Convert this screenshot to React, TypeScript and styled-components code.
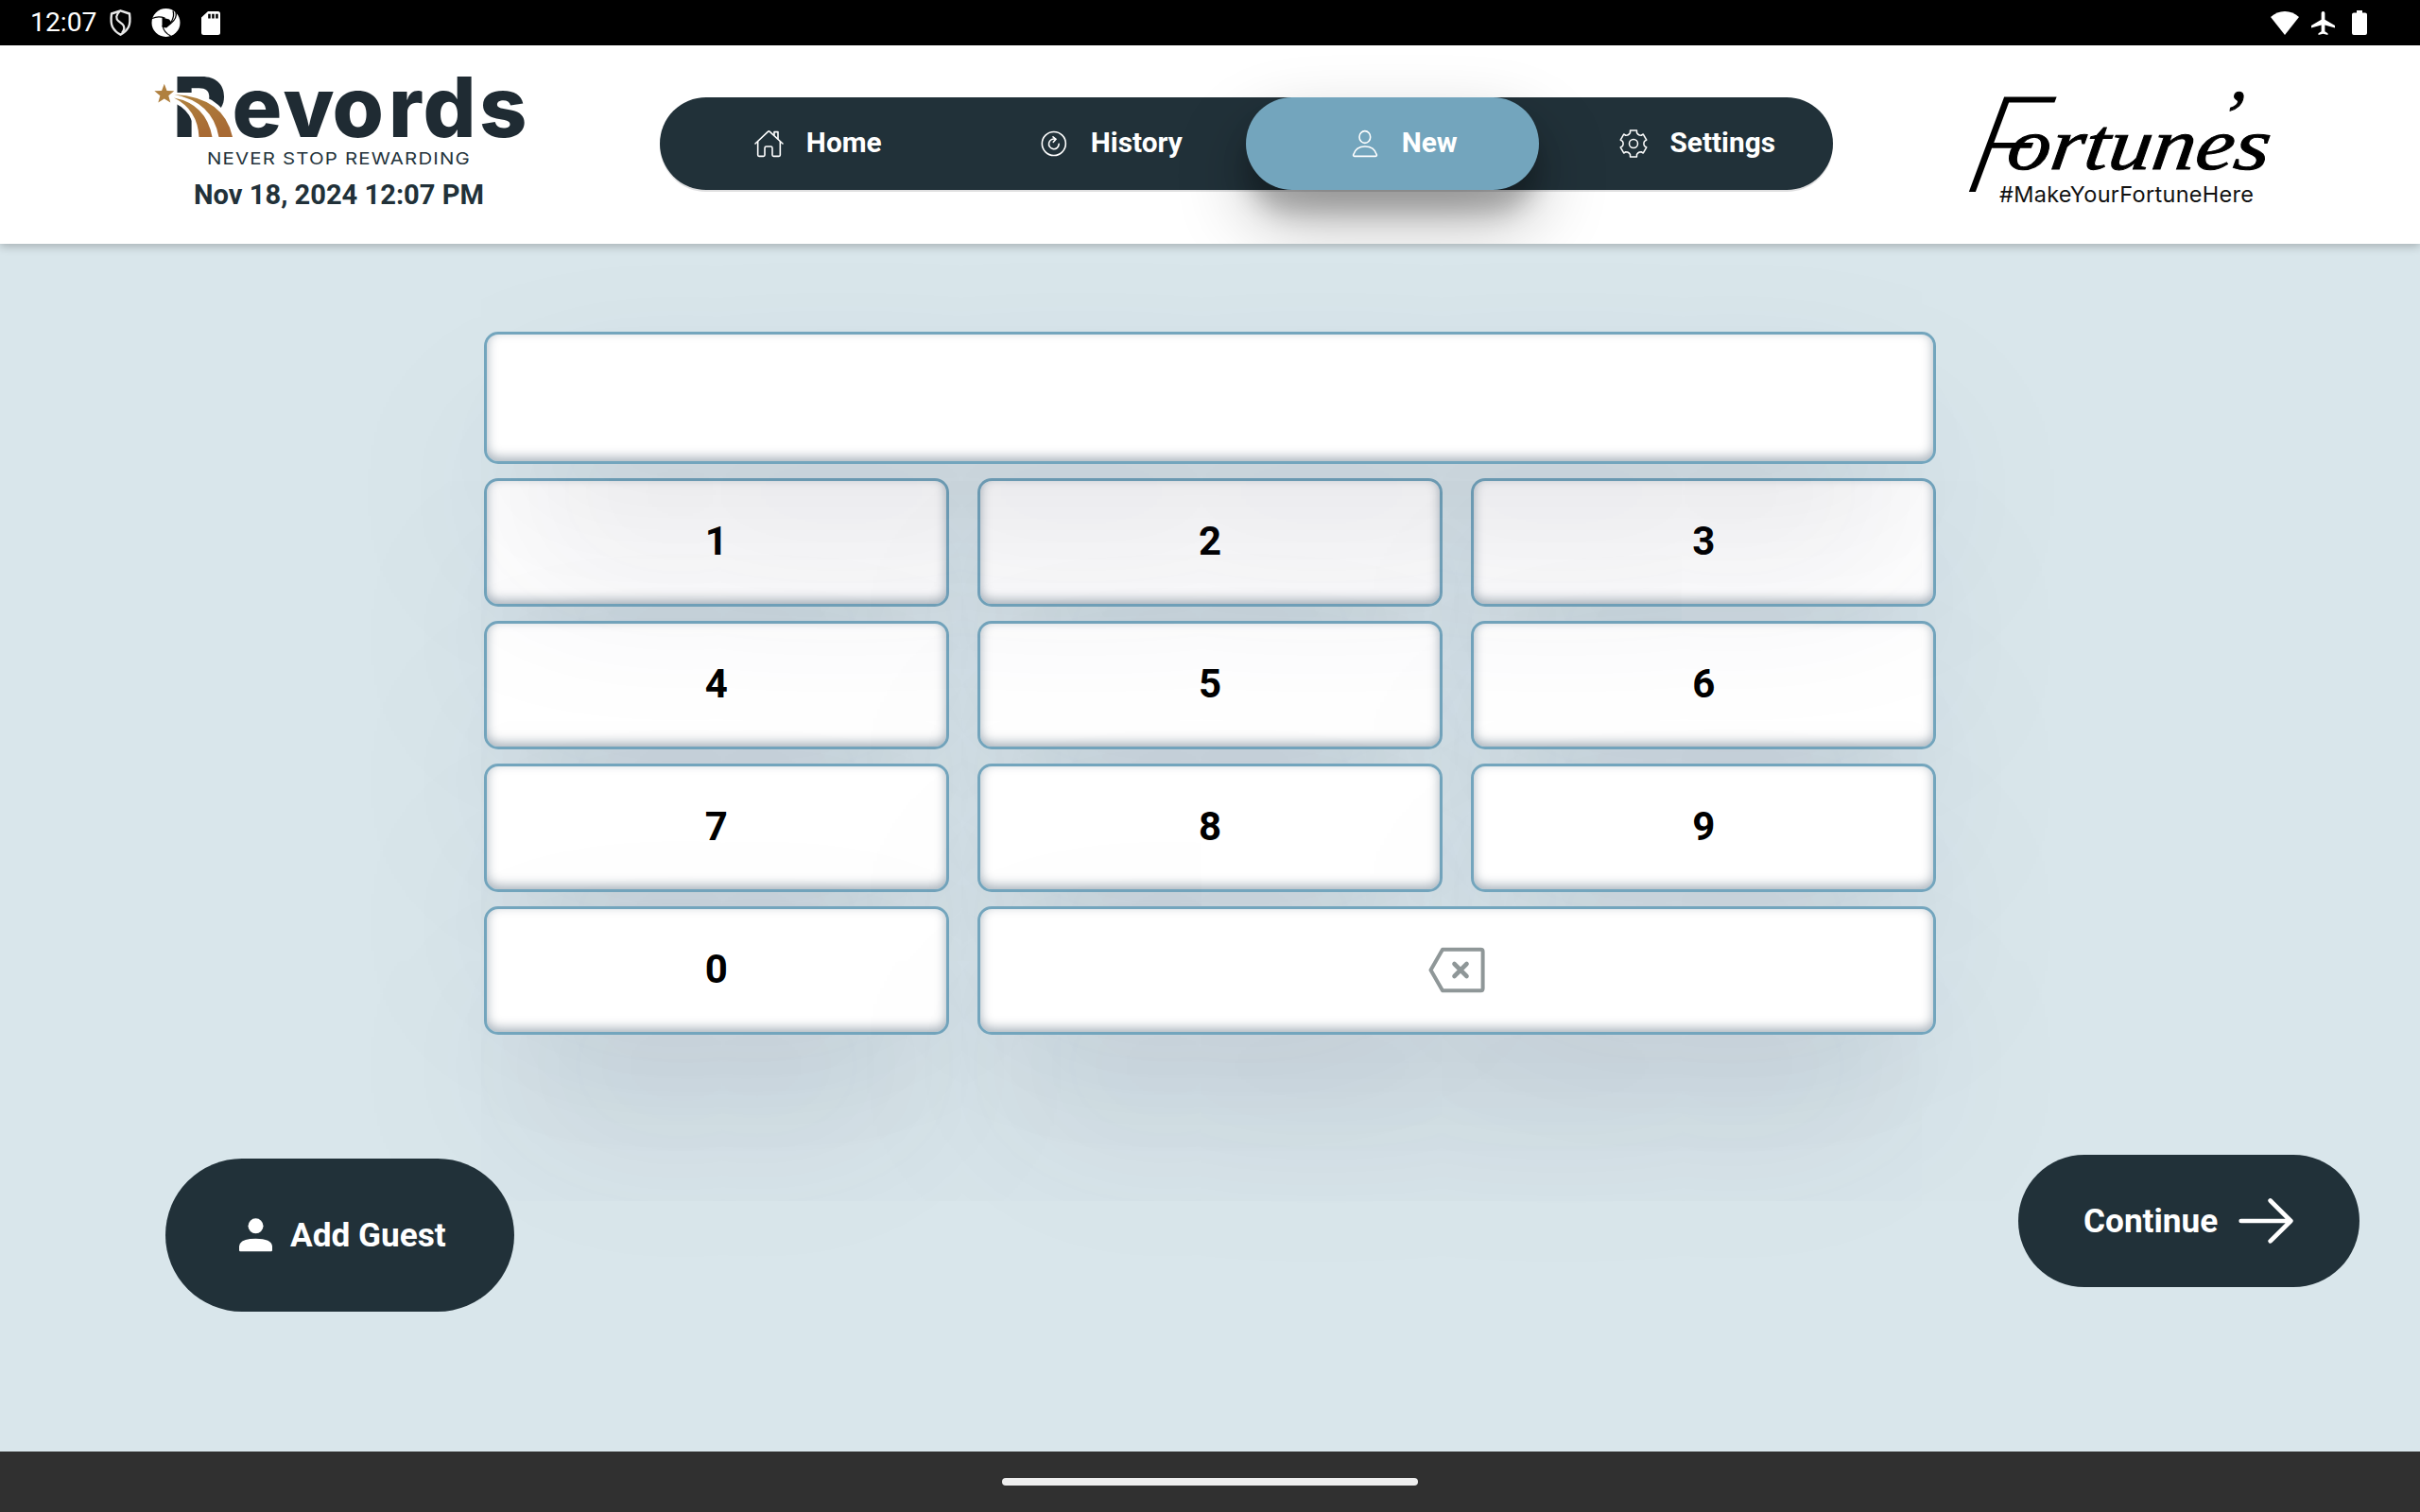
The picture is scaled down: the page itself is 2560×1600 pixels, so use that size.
import React from "react";
import styled, { createGlobalStyle, css } from "styled-components";

const NAVY = "#213139";
const BLUE = "#73a5bd";

const GlobalStyle = createGlobalStyle`
  * { box-sizing: border-box; }
  html, body { margin: 0; padding: 0; }
  body { font-family: Roboto, sans-serif; background: #d9e6eb; overflow: hidden; }
  button { font-family: inherit; border: 0; margin: 0; padding: 0; cursor: pointer; }
  svg { display: block; flex: none; overflow: visible; }
`;

const Screen = styled.div`
  width: 2560px;
  height: 1600px;
  display: flex;
  flex-direction: column;
  background: #d9e6eb;
  overflow: hidden;
`;

const StatusBar = styled.div`
  height: 48px;
  flex: none;
  display: flex;
  align-items: center;
  background: #000;
  color: #fff;
  padding: 0 56px 0 32px;
`;

const Clock = styled.span`
  width: 83.5px;
  font-size: 28.3px;
  line-height: 48px;
`;

const StatusGroup = styled.div<{ $gap: number; $end?: boolean }>`
  display: flex;
  align-items: center;
  gap: ${(p) => p.$gap}px;
  margin-left: ${(p) => (p.$end ? "auto" : "0")};
`;

const Header = styled.header`
  height: 210px;
  flex: none;
  display: flex;
  align-items: flex-start;
  background: #fff;
  box-shadow: 0 3px 9px rgba(0, 0, 0, 0.23);
`;

const Brand = styled.div`
  width: 400px;
  margin: 28px 0 0 160px;
  display: flex;
  flex-direction: column;
  align-items: center;
`;

const DateLine = styled.div`
  margin-top: 7px;
  padding-right: 3px;
  font-size: 29.1px;
  line-height: 34px;
  font-weight: 700;
  color: ${NAVY};
  white-space: nowrap;
`;

const Nav = styled.nav`
  width: 1241px;
  height: 98px;
  margin: 55px 0 0 138px;
  display: flex;
  border-radius: 49px;
  background: ${NAVY};
  box-shadow: 0 2px 0 rgba(17, 17, 26, 0.13);
`;

const NavItem = styled.button<{ $active?: boolean }>`
  flex: none;
  width: 310px;
  display: flex;
  align-items: center;
  justify-content: center;
  gap: 23.5px;
  padding-left: 25px;
  border-radius: 49px;
  background: transparent;
  color: #fff;
  ${(p) =>
    p.$active &&
    css`
      background: ${BLUE};
      box-shadow: 0 34px 76px rgba(0, 0, 0, 0.28), 0 24px 24px rgba(0, 0, 0, 0.22);
      clip-path: inset(-55px -120px -57px -120px);
    `}
`;

const NavLabel = styled.span`
  font-size: 29.8px;
  line-height: 36px;
  font-weight: 700;
  padding-bottom: 2px;
`;

const Partner = styled.div`
  margin: 38px 0 0 141px;
`;

const Main = styled.main`
  flex: 1;
  display: flex;
  flex-direction: column;
  padding-top: 93px;
`;

const Pad = styled.section`
  width: 1536px;
  margin: 0 auto;
  display: grid;
  grid-template-columns: repeat(3, 1fr);
  grid-template-rows: 140px repeat(4, 136px);
  gap: 15px 30.72px;
`;

const panel = css`
  border: 3px solid ${BLUE};
  border-radius: 15px;
  background: #fff;
  box-shadow: rgba(50, 50, 93, 0.22) 0 100px 210px -36px,
    rgba(0, 0, 0, 0.26) 0 60px 125px -60px,
    rgba(10, 37, 64, 0.35) 0 -4px 12px 0 inset;
`;

const Field = styled.div`
  ${panel}
  grid-column: 1 / -1;
  position: relative;
  z-index: 1;
`;

const Key = styled.button<{ $span?: number }>`
  ${panel}
  grid-column: span ${(p) => p.$span ?? 1};
  display: flex;
  align-items: center;
  justify-content: center;
  padding-bottom: 3px;
  font-size: 42px;
  font-weight: 700;
  color: #000;
`;

const Actions = styled.div`
  display: flex;
  align-items: flex-start;
  justify-content: space-between;
  margin-top: 127px;
  padding: 0 64px 0 175px;
  position: relative;
`;

const Action = styled.button<{ $w: number; $h: number; $gap: number; $top: number; $left: number }>`
  width: ${(p) => p.$w}px;
  height: ${(p) => p.$h}px;
  margin-top: ${(p) => p.$top}px;
  padding-left: ${(p) => p.$left}px;
  display: flex;
  align-items: center;
  gap: ${(p) => p.$gap}px;
  border-radius: 81px;
  background: ${NAVY};
  color: #fff;
`;

const ActionLabel = styled.span<{ $lift?: number }>`
  font-size: 35.2px;
  line-height: 42px;
  font-weight: 700;
  padding-bottom: ${(p) => p.$lift ?? 0}px;
  white-space: nowrap;
`;

const GestureBar = styled.div`
  height: 64px;
  flex: none;
  display: flex;
  align-items: center;
  justify-content: center;
  background: #303030;
`;

const GestureHandle = styled.div`
  width: 440px;
  height: 8px;
  border-radius: 4px;
  background: #eee;
`;

const ShieldIcon = () => (
  <svg width="23" height="28" viewBox="0 0 23 28" fill="none" stroke="#e8e8e8">
    <path d="M11.5 1.3 L2 4.5 Q.8 14 3 18.500 Q6 24 11.500 26.700 Q17 24 20 18.500 Q22.200 14 21 4.500 Z" strokeWidth="2.400" strokeLinejoin="round" />
    <path d="M10.500 2 Q4.500 8 9.500 12.500 L13.500 15.500 Q17.500 19.500 13 25" strokeWidth="2.200" />
  </svg>
);

const ApertureIcon = () => (
  <svg width="30" height="30" viewBox="0.5 0 30 30">
    <circle cx="15" cy="15" r="15" fill="#fff" />
    <path d="M11 9.500 L18.500 11.500 L21.500 15.500 L15.500 20.500 L11 19.500 Z" fill="#000" />
    <g stroke="#000" strokeWidth="1.300" fill="none">
      <path d="M14 10.200 Q7 7.500 .5 10.500" />
      <path d="M20.500 14.500 Q24.500 8 22.500 2.500" />
      <path d="M21 15 Q27 10 25.500 3.500" />
      <path d="M11.500 18 Q13 26 20 28.800" />
    </g>
  </svg>
);

const SdIcon = () => (
  <svg width="20" height="25" viewBox="0 0 20 25">
    <path d="M7 0 H17.500 Q20 0 20 2.500 V22.500 Q20 25 17.500 25 H2.500 Q0 25 0 22.500 V6.500 Z" fill="#fff" />
    <path d="M7.200 2.800 h2.500 v4.700 h-2.500z M11.200 2.800 h2.500 v4.700 h-2.500z M15.200 2.800 h2.500 v4.700 h-2.500z" fill="#000" />
  </svg>
);

const WifiIcon = () => (
  <svg width="30" height="25" viewBox="0 0 30 25">
    <path d="M0 6 Q6.500 0 15 0 Q23.500 0 30 6 L15 25 Z" fill="#fff" />
  </svg>
);

const PlaneIcon = () => (
  <svg width="25" height="25" viewBox="2 2 20 20">
    <path d="M22 16v-2l-8.500-5V3.500c0-.83-.67-1.500-1.500-1.500s-1.500.67-1.500 1.500V9L2 14v2l8.500-2.500V19L8 20.500V22l4-1 4 1v-1.500L13.500 19v-5.500L22 16z" fill="#fff" />
  </svg>
);

const BatteryIcon = () => (
  <svg width="21" height="26" viewBox="-5 0 21 26">
    <path d="M5 0 H11 V2.500 H14 Q16 2.500 16 4.500 V24 Q16 26 14 26 H2 Q0 26 0 24 V4.500 Q0 2.500 2 2.500 H5 Z" fill="#fff" />
  </svg>
);

const STAR_POINTS = Array.from({ length: 10 }, (_, i) => {
  const r = i % 2 ? 4.7 : 11;
  const a = (Math.PI / 5) * i - Math.PI / 2;
  return `${(173.8 + r * Math.cos(a)).toFixed(2)},${(99.7 + r * Math.sin(a)).toFixed(2)}`;
}).join(" ");

const RevordsLogo = () => (
  <svg width="400" height="106" viewBox="160 76 400 106">
    <defs>
      <linearGradient id="gold" x1="0" y1="0" x2="0.6" y2="1">
        <stop offset="0" stopColor="#b0843f" />
        <stop offset="1" stopColor="#a86a34" />
      </linearGradient>
    </defs>
    <text
      x="182.500 245.500 299.500 351.500 411 447.500 507"
      y="144.500"
      fontFamily="Inter, sans-serif"
      fontWeight="800"
      fontSize="88"
      fill="#1f2b33"
    >
      Revords
    </text>
    <path
      d="M184 98 H205 Q225 103 238.500 118.500 L246 124 L247.500 147 H203 V128 Q199 116 184 108.500 Z"
      fill="#fff"
    />
    <path d="M184 103.500 Q218 110 224.500 145 H210.500 Q209 116 184 103.500 Z" fill="url(#gold)" />
    <path d="M184.500 100 Q237 103 246 145 H231.500 Q225 108 184.500 100 Z" fill="url(#gold)" />
    <polygon points={STAR_POINTS} fill="#b0803f" />
    <text
      x="219"
      y="174.300"
      fontFamily="Inter, sans-serif"
      fontSize="17.500"
      fill="#24333b"
      textLength="279"
      lengthAdjust="spacingAndGlyphs"
      letterSpacing="1"
    >
      NEVER STOP REWARDING
    </text>
  </svg>
);

const FortunesLogo = () => (
  <svg width="326" height="136" viewBox="2080 86 326 136">
    <text
      transform="translate(2074 203) skewX(-14)"
      fontFamily="Lato, sans-serif"
      fontStyle="italic"
      fontWeight="300"
      fontSize="142"
      fill="#000"
    >
      F
    </text>
    <g fontFamily="'Liberation Serif', serif" fontStyle="italic" fontSize="78" fill="#000" stroke="#000" strokeWidth="1">
      <text
        transform="translate(2121 179) skewX(-8)"
        textLength="240"
        lengthAdjust="spacingAndGlyphs"
      >
        ortune
      </text>
      <text transform="translate(2343 149) skewX(-8)">’</text>
      <text transform="translate(2361 179) skewX(-8) scale(1.25 1)">s</text>
    </g>
    <text
      x="2115"
      y="214"
      fontFamily="Inter, sans-serif"
      fontSize="23.500"
      fill="#111"
      textLength="269"
      lengthAdjust="spacing"
    >
      #MakeYourFortuneHere
    </text>
  </svg>
);

const HomeIcon = () => (
  <svg width="31" height="30" viewBox="55 111 93 90" fill="none" stroke="#fff" strokeWidth="4.800" strokeLinecap="round" strokeLinejoin="round">
    <path d="M58 156 L98 118 Q101 115 104 118 L145 156" />
    <path d="M118 128 V119 H130 V140" />
    <path d="M66 150 V192 Q66 196 70 196 H84 Q88 196 88 192 V170 Q88 165 93 165 H107 Q112 165 112 170 V192 Q112 196 116 196 H133 Q137 196 137 192 V150" />
  </svg>
);

const HistoryIcon = () => (
  <svg width="30" height="30" viewBox="960 111 90 90" fill="none" stroke="#fff" strokeWidth="4.800" strokeLinecap="round" strokeLinejoin="round">
    <circle cx="1004.500" cy="156" r="37.500" />
    <path d="M1020.500 157 A16 16 0 1 1 1010 142" />
    <path d="M1002 134.500 L1011 142 L1003 151" />
  </svg>
);

const PersonIcon = () => (
  <svg width="30" height="30" viewBox="57 111 90 90" fill="none" stroke="#fff" strokeWidth="4.800" strokeLinejoin="round">
    <ellipse cx="101.500" cy="135" rx="17.500" ry="19" />
    <path d="M68 196 H136 Q140 196 139 191 Q131 165 102 165 Q73 165 65 191 Q64 196 68 196 Z" />
  </svg>
);

const GEAR_PATH =
  Array.from({ length: 6 }, (_, i) => {
    const base = i * 60 - 90;
    return [
      [-25, 33],
      [-17, 36],
      [-14, 43],
      [14, 43],
      [17, 36],
      [25, 33],
    ]
      .map(([deg, r]) => {
        const a = ((base + deg) * Math.PI) / 180;
        return `${(r * Math.cos(a)).toFixed(1)} ${(r * Math.sin(a)).toFixed(1)}`;
      })
      .join(" L");
  }).reduce((d, seg, i) => d + (i ? " L" : "M") + seg, "") + " Z";

const GearIcon = () => (
  <svg width="30" height="30" viewBox="-45 -45 90 90" fill="none" stroke="#fff" strokeWidth="4.600" strokeLinejoin="round">
    <path d={GEAR_PATH} />
    <circle r="13.500" />
  </svg>
);

const BackspaceIcon = () => (
  <svg width="60" height="48" viewBox="0 -0.5 60 48" fill="none" stroke="#8f9798" strokeWidth="4" strokeLinecap="round" strokeLinejoin="round">
    <path d="M2.500 24 L15 2.300 H55.500 Q57.600 2.300 57.600 4.500 V43.500 Q57.600 45.700 55.500 45.700 H15 Z" />
    <path d="M27.500 17.500 L40.500 30.500 M40.500 17.500 L27.500 30.500" strokeWidth="4.600" />
  </svg>
);

const GuestIcon = () => (
  <svg width="35" height="36" viewBox="339 329 105 108" fill="#fff">
    <circle cx="391.500" cy="354" r="24" />
    <path d="M339 418 Q341 394 391.500 394 Q442 394 444 418 V431 Q444 435 440 435 H343 Q339 435 339 431 Z" />
  </svg>
);

const ArrowIcon = () => (
  <svg width="58" height="48" viewBox="866 263 174 144" fill="none" stroke="#fff" strokeWidth="14" strokeLinecap="round" strokeLinejoin="round">
    <path d="M874 335 H1032 M967 270.500 L1032 335 L967 399" />
  </svg>
);

const NAV = [
  { label: "Home", Icon: HomeIcon },
  { label: "History", Icon: HistoryIcon },
  { label: "New", Icon: PersonIcon, active: true },
  { label: "Settings", Icon: GearIcon },
];

const DIGITS = ["1", "2", "3", "4", "5", "6", "7", "8", "9", "0"];

export default function App() {
  return (
    <>
      <GlobalStyle />
      <Screen>
        <StatusBar>
          <Clock>12:07</Clock>
          <StatusGroup $gap={22}>
            <ShieldIcon />
            <ApertureIcon />
            <SdIcon />
          </StatusGroup>
          <StatusGroup $gap={13} $end>
            <WifiIcon />
            <PlaneIcon />
            <BatteryIcon />
          </StatusGroup>
        </StatusBar>
        <Header>
          <Brand>
            <RevordsLogo />
            <DateLine>Nov 18, 2024 12:07 PM</DateLine>
          </Brand>
          <Nav>
            {NAV.map(({ label, Icon, active }) => (
              <NavItem key={label} $active={active}>
                <Icon />
                <NavLabel>{label}</NavLabel>
              </NavItem>
            ))}
          </Nav>
          <Partner>
            <FortunesLogo />
          </Partner>
        </Header>
        <Main>
          <Pad>
            <Field />
            {DIGITS.map((d) => (
              <Key key={d}>{d}</Key>
            ))}
            <Key $span={2} aria-label="Backspace">
              <BackspaceIcon />
            </Key>
          </Pad>
          <Actions>
            <Action $w={369} $h={162} $gap={19} $top={4} $left={78}>
              <GuestIcon />
              <ActionLabel>Add Guest</ActionLabel>
            </Action>
            <Action $w={361} $h={140} $gap={22} $top={0} $left={69}>
              <ActionLabel $lift={1}>Continue</ActionLabel>
              <ArrowIcon />
            </Action>
          </Actions>
        </Main>
        <GestureBar>
          <GestureHandle />
        </GestureBar>
      </Screen>
    </>
  );
}
